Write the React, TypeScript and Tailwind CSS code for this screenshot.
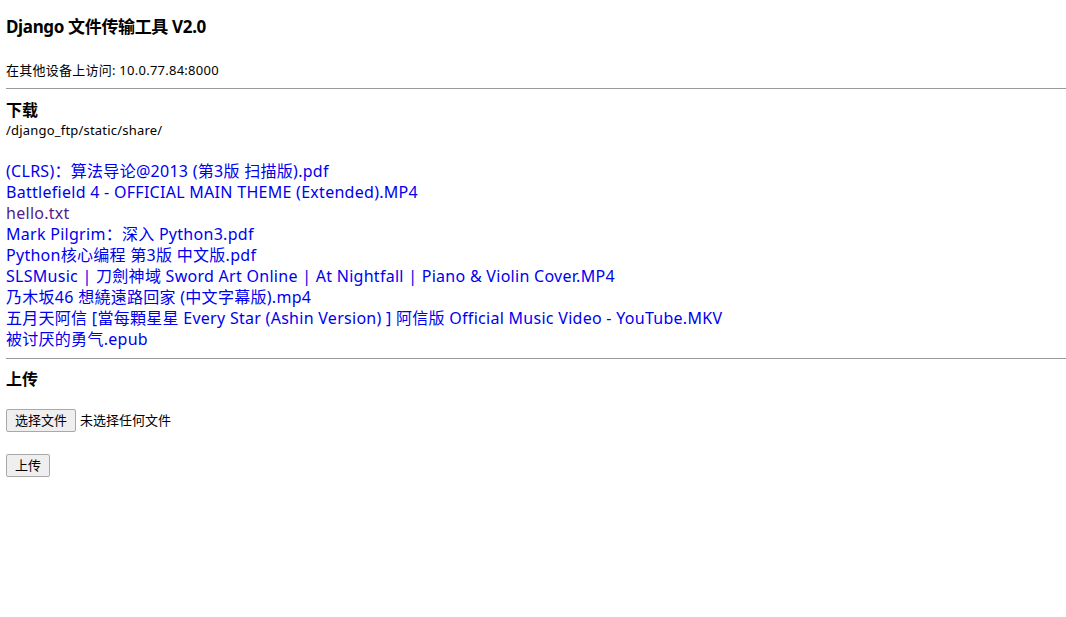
const files = [
  { name: "(CLRS)：算法导论@2013 (第3版 扫描版).pdf" },
  { name: "Battlefield 4 - OFFICIAL MAIN THEME (Extended).MP4" },
  { name: "hello.txt", visited: true },
  { name: "Mark Pilgrim：深入 Python3.pdf" },
  { name: "Python核心编程 第3版 中文版.pdf" },
  { name: "SLSMusic | 刀劍神域 Sword Art Online | At Nightfall | Piano & Violin Cover.MP4" },
  { name: "乃木坂46 想繞遠路回家 (中文字幕版).mp4" },
  { name: "五月天阿信 [當每顆星星 Every Star (Ashin Version) ] 阿信版 Official Music Video - YouTube.MKV" },
  { name: "被讨厌的勇气.epub" },
];

const btn =
  "h-[23px] px-[8px] text-[13px] leading-[21px] text-black bg-[#efefef] border border-[#a9a9a9] rounded-[2px]";

export default function App() {
  return (
    <div
      className="min-h-[617px] bg-white pl-[6px] text-black"
      style={{ fontFamily: '"Noto Sans", "Noto Sans CJK SC", sans-serif' }}
    >
      <h3 className="pt-[16px] text-[17px] font-bold leading-[22px] tracking-[-0.35px]">
        Django 文件传输工具 V2.0
      </h3>
      <p className="mt-[24px] text-[13px] leading-[17px] tracking-[0.25px]">
        在其他设备上访问: 10.0.77.84:8000
      </p>
      <hr className="mt-[9px] border-t border-[#9a9a9a]" />

      <h3 className="mt-[11px] text-[16px] font-bold leading-[21px]">下载</h3>
      <p className="mt-[1px] text-[13px] leading-[17px] tracking-[0.2px]">/django_ftp/static/share/</p>

      <div className="mt-[22px] flex flex-col">
        {files.map((f) => (
          <a
            key={f.name}
            href="#"
            className={`text-[16px] leading-[21px] tracking-[0.28px] whitespace-nowrap ${
              f.visited ? "text-[#551a8b]" : "text-[#0000ee]"
            }`}
          >
            {f.name}
          </a>
        ))}
      </div>
      <hr className="mt-[8px] border-t border-[#9a9a9a]" />

      <h3 className="mt-[10px] text-[16px] font-bold leading-[21px]">上传</h3>

      <div className="mt-[19px] flex items-center gap-[4px]">
        <button className={btn}>选择文件</button>
        <span className="text-[13px] leading-[21px]">未选择任何文件</span>
      </div>

      <div className="mt-[20px]">
        <button className={btn}>上传</button>
      </div>
    </div>
  );
}
